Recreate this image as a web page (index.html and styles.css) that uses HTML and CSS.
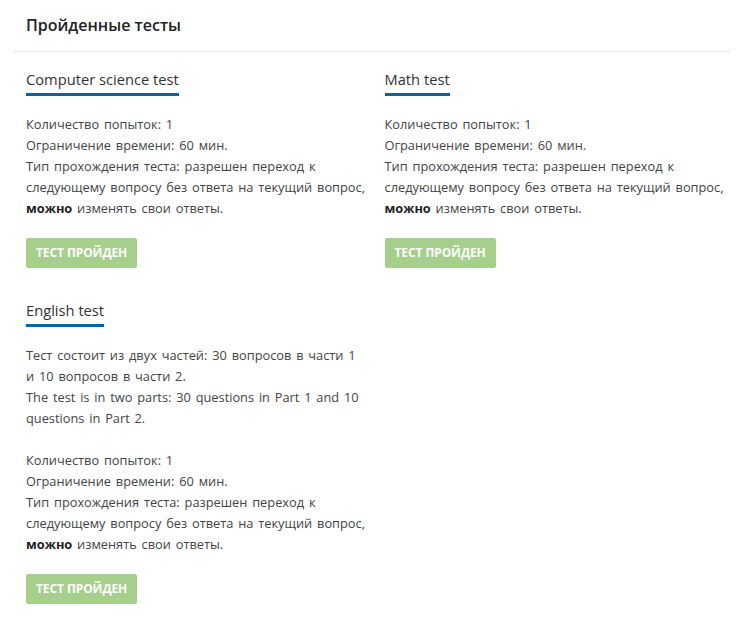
FILE: index.html
```html
<!DOCTYPE html>
<html>
  <head>
    <meta charset="utf-8">
    <title>Пройденные тесты</title>
    <link rel="stylesheet" href="styles.css">
  </head>
  <body>
    <div class="panel">
      <div class="panel-head">Пройденные тесты</div>
      <div class="tests">
        <div class="test">
          <div class="test-title"><span>Computer science test</span></div>
          <div class="test-info">
            <p>Количество попыток: 1<br>Ограничение времени: 60 мин.<br>Тип прохождения теста: разрешен переход к следующему вопросу без ответа на текущий вопрос, <b>можно</b> изменять свои ответы.</p>
          </div>
          <div class="btn-done">Тест пройден</div>
        </div>
        <div class="test">
          <div class="test-title"><span>Math test</span></div>
          <div class="test-info">
            <p>Количество попыток: 1<br>Ограничение времени: 60 мин.<br>Тип прохождения теста: разрешен переход к следующему вопросу без ответа на текущий вопрос, <b>можно</b> изменять свои ответы.</p>
          </div>
          <div class="btn-done">Тест пройден</div>
        </div>
        <div class="test">
          <div class="test-title"><span>English test</span></div>
          <div class="test-info">
            <p>Тест состоит из двух частей: 30 вопросов в части 1 и 10 вопросов в части 2.<br>The test is in two parts: 30 questions in Part 1 and 10 questions in Part 2.</p>
            <p>Количество попыток: 1<br>Ограничение времени: 60 мин.<br>Тип прохождения теста: разрешен переход к следующему вопросу без ответа на текущий вопрос, <b>можно</b> изменять свои ответы.</p>
          </div>
          <div class="btn-done">Тест пройден</div>
        </div>
      </div>
    </div>
  </body>
</html>
```

FILE: styles.css
```css
body {
  margin: 0;
  background-color: #fff;
  font-family: "Open Sans", "Noto Sans", sans-serif;
  color: #444;
}
.panel {
  margin: 0 25px 0 13px;
}
.panel-head {
  height: 51px;
  line-height: 50px;
  padding-left: 13px;
  font-size: 16px;
  font-weight: 600;
  color: #222;
  border-bottom: 1px solid #e6e6e6;
}
.tests {
  display: grid;
  grid-template-columns: 1fr 1fr;
  padding-top: 13px;
}
.test {
  padding: 0 4px 28px 13px;
}
.test-title {
  height: 32px;
}
.test-title span {
  display: inline-block;
  font-size: 14.7px;
  line-height: 28px;
  color: #333;
  border-bottom: 3px solid #0065ac;
}
.test-info {
  padding-top: 17px;
  font-size: 12.8px;
  line-height: 21px;
  word-spacing: 1.5px;
}
.test-info p {
  margin: 0 0 21px;
}
.test-info p:last-child {
  margin-bottom: 19px;
}
.test-info b {
  font-weight: 700;
  color: #222;
}
.btn-done {
  display: inline-block;
  height: 30px;
  line-height: 30px;
  padding: 0 10px;
  border-radius: 2px;
  background-color: #a5cf8a;
  color: #fff;
  font-size: 12px;
  font-weight: 700;
  text-transform: uppercase;
  letter-spacing: -0.1px;
}
```
